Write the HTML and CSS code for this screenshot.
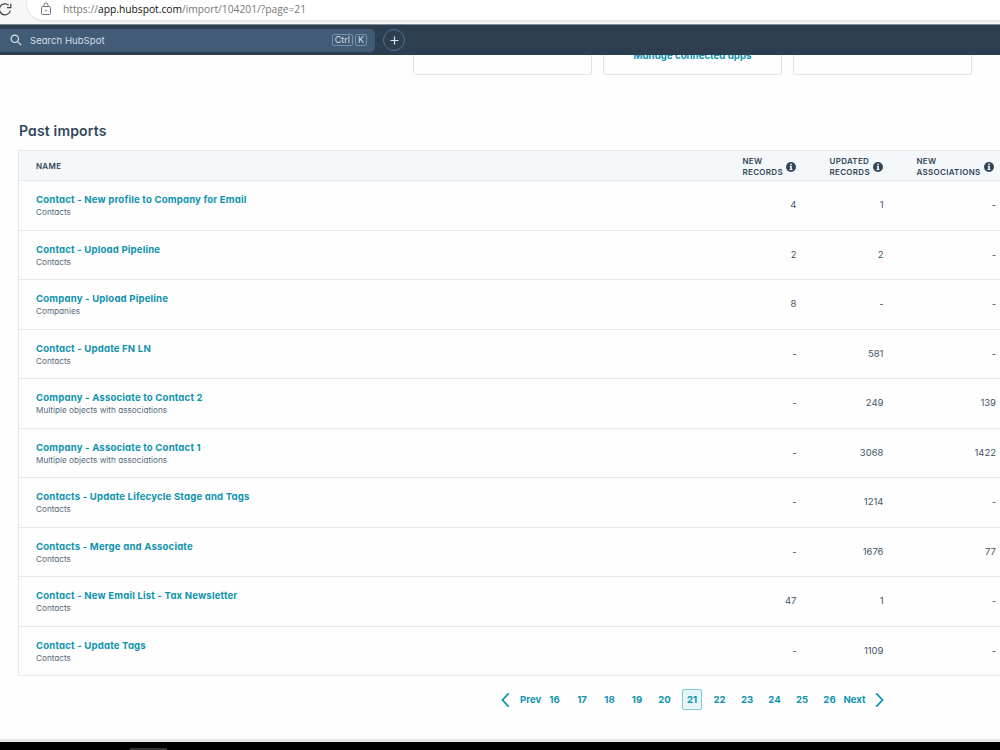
FILE: index.html
```
<!DOCTYPE html>
<html lang="en">
<head>
    <meta charset="UTF-8">
    <meta name="viewport" content="width=device-width, initial-scale=1.0">
    <title>Imports</title>
    <link rel="stylesheet" href="styles.css">
</head>
<body>
    <div class="browser-bar">
        <svg class="reload" width="14" height="16" viewBox="0 0 14 16"><path d="M8.6 4.2A5.5 5.5 0 1 0 10.3 9.6M10.8 2.8V6.6H7"/></svg>
        <div class="address">
            <svg class="lock" width="12" height="14" viewBox="0 0 12 14"><rect x="1.5" y="4.5" width="9" height="8" rx="1.2"/><path d="M4 4.5V3a2 2 0 0 1 4 0v1.5"/><circle cx="6" cy="8.5" r=".5"/></svg>
            <span class="url">https://<b>app.hubspot.com</b>/import/104201/?page=21</span>
        </div>
    </div>

    <nav class="topnav">
        <div class="search">
            <svg width="12" height="12" viewBox="0 0 12 12"><circle cx="4.8" cy="4.8" r="3.7"/><path d="M7.6 7.6L11.2 11.2"/></svg>
            <span class="search-text">Search HubSpot</span>
            <kbd>Ctrl</kbd><kbd>K</kbd>
        </div>
        <div class="add"><svg width="9" height="9" viewBox="0 0 9 9"><path d="M4.5 .5v8M.5 4.5h8"/></svg></div>
    </nav>

    <main>
        <div class="cards">
            <div class="card"></div>
            <div class="card"><a>Manage connected apps</a></div>
            <div class="card"></div>
        </div>

        <h1>Past imports</h1>

        <div class="table">
            <div class="row head">
                <div>NAME</div>
                <div class="th"><span>NEW<br>RECORDS</span><svg class="info" width="10" height="10" viewBox="0 0 10 10"><circle cx="5" cy="5" r="5"/><path d="M4.2 1.8h1.6v1.4H4.2zM3.8 4.1h2v2.9h.6v1H3.6V7h.7V5.1h-.5z"/></svg></div>
                <div class="th"><span>UPDATED<br>RECORDS</span><svg class="info" width="10" height="10" viewBox="0 0 10 10"><circle cx="5" cy="5" r="5"/><path d="M4.2 1.8h1.6v1.4H4.2zM3.8 4.1h2v2.9h.6v1H3.6V7h.7V5.1h-.5z"/></svg></div>
                <div class="th"><span>NEW<br>ASSOCIATIONS</span><svg class="info" width="10" height="10" viewBox="0 0 10 10"><circle cx="5" cy="5" r="5"/><path d="M4.2 1.8h1.6v1.4H4.2zM3.8 4.1h2v2.9h.6v1H3.6V7h.7V5.1h-.5z"/></svg></div>
            </div>
            <div class="row">
                <div><a>Contact - New profile to Company for Email</a><small>Contacts</small></div>
                <div class="num">4</div><div class="num">1</div><div class="num">-</div>
            </div>
            <div class="row">
                <div><a>Contact - Upload Pipeline</a><small>Contacts</small></div>
                <div class="num">2</div><div class="num">2</div><div class="num">-</div>
            </div>
            <div class="row">
                <div><a>Company - Upload Pipeline</a><small>Companies</small></div>
                <div class="num">8</div><div class="num">-</div><div class="num">-</div>
            </div>
            <div class="row">
                <div><a>Contact - Update FN LN</a><small>Contacts</small></div>
                <div class="num">-</div><div class="num">581</div><div class="num">-</div>
            </div>
            <div class="row">
                <div><a>Company - Associate to Contact 2</a><small>Multiple objects with associations</small></div>
                <div class="num">-</div><div class="num">249</div><div class="num">139</div>
            </div>
            <div class="row">
                <div><a>Company - Associate to Contact 1</a><small>Multiple objects with associations</small></div>
                <div class="num">-</div><div class="num">3068</div><div class="num">1422</div>
            </div>
            <div class="row">
                <div><a>Contacts - Update Lifecycle Stage and Tags</a><small>Contacts</small></div>
                <div class="num">-</div><div class="num">1214</div><div class="num">-</div>
            </div>
            <div class="row">
                <div><a>Contacts - Merge and Associate</a><small>Contacts</small></div>
                <div class="num">-</div><div class="num">1676</div><div class="num">77</div>
            </div>
            <div class="row">
                <div><a>Contact - New Email List - Tax Newsletter</a><small>Contacts</small></div>
                <div class="num">47</div><div class="num">1</div><div class="num">-</div>
            </div>
            <div class="row">
                <div><a>Contact - Update Tags</a><small>Contacts</small></div>
                <div class="num">-</div><div class="num">1109</div><div class="num">-</div>
            </div>
        </div>

        <div class="pagination">
            <svg width="9" height="16" viewBox="0 0 9 16"><path d="M7.7 1.3L1.5 8l6.2 6.7"/></svg>
            <a class="prev">Prev</a>
            <div class="pages">
                <a>16</a><a>17</a><a>18</a><a>19</a><a>20</a><a class="current">21</a><a>22</a><a>23</a><a>24</a><a>25</a><a>26</a>
            </div>
            <a class="next">Next</a>
            <svg width="9" height="16" viewBox="0 0 9 16"><path d="M1.3 1.3L7.5 8l-6.2 6.7"/></svg>
        </div>
    </main>

    <footer class="taskbar"><div class="task"></div></footer>
</body>
</html>
```
FILE: styles.css
```
* {
    box-sizing: border-box;
}

body {
    display: flex;
    flex-direction: column;
    height: 750px;
    margin: 0;
    overflow: hidden;
    background: #fefefe;
    color: #33475b;
    font-family: Inter, "Liberation Sans", sans-serif;
    font-feature-settings: "cv11";
}

svg {
    flex: none;
    fill: none;
}

/* Browser */
.browser-bar {
    display: flex;
    flex: none;
    height: 25px;
    background: #f7f7f7;
    border-bottom: 1px solid #7d8a94;
}

.reload {
    width: 14px;
    margin-top: 1px;
    stroke: #444;
    stroke-width: 1.2;
}

.address {
    display: flex;
    flex: 1;
    height: 22px;
    margin-left: 12px;
    padding-left: 13px;
    background: #fff;
    border: solid #e6e6e4;
    border-width: 0 0 2px 1px;
    border-radius: 0 0 0 18px;
}

.lock {
    margin-top: 2px;
    stroke: #777;
}

.url {
    margin-left: 11px;
    font: 10.25px/19px "Open Sans", sans-serif;
    color: #777;
}

.url b {
    font-weight: 400;
    color: #111;
}

/* Top navigation */
.topnav {
    display: flex;
    flex: none;
    align-items: center;
    height: 30px;
    background: #2d3e50;
}

.search {
    display: flex;
    align-items: center;
    width: 375px;
    height: 23px;
    padding: 0 8px 0 10px;
    background: #425b76;
    border-radius: 0 5px 5px 0;
    color: #d5dee8;
}

.search svg,
.add svg {
    stroke: #dfe6ee;
    stroke-width: 1.2;
}

.search-text {
    flex: 1;
    margin-left: 8px;
    font-size: 9.6px;
}

kbd {
    height: 12px;
    margin-left: 2px;
    padding: 0 2px;
    border: 1px solid #7890a8;
    border-radius: 2px;
    font: 9px/10px Inter, sans-serif;
}

.add {
    display: flex;
    align-items: center;
    justify-content: center;
    width: 22px;
    height: 22px;
    margin-left: 8px;
    border: 1px solid #516f90;
    border-radius: 50%;
}

/* Page */
main {
    flex: 1;
    min-height: 0;
    overflow: hidden;
}

a {
    color: #0f93ae;
    font-weight: 700;
}

.cards {
    display: flex;
    gap: 11px;
    height: 20px;
    margin-left: 413px;
    overflow: hidden;
}

.card {
    width: 179px;
    border: 1px solid #e1e4ee;
    border-top: 0;
    border-radius: 0 0 3px 3px;
    text-align: center;
}

.card a {
    display: block;
    margin-top: -6px;
    font-size: 9.7px;
    line-height: 14px;
}

h1 {
    margin: 46px 0 10px 19px;
    font-size: 14px;
    font-weight: 600;
    letter-spacing: .15px;
    line-height: 19px;
}

.table {
    width: 1040px;
    margin-left: 18px;
    border: 1px solid #e3e8ee;
}

.row {
    display: grid;
    grid-template-columns: 706px 87px 87px 1fr;
    height: 49.5px;
    padding-left: 17px;
    border-bottom: 1px solid #e3e8ee;
}

.row:last-child {
    height: 48.5px;
    border-bottom: 0;
}

.row a {
    display: block;
    margin-top: 12px;
    font-size: 9.6px;
    letter-spacing: .17px;
    line-height: 13px;
}

small {
    display: block;
    font-size: 8.2px;
    line-height: 12px;
    color: #566a7e;
}

.num {
    width: 54.5px;
    font-size: 9.5px;
    line-height: 48px;
    text-align: right;
    color: #425568;
}

.num:last-child {
    width: 80px;
}

.head {
    align-items: center;
    height: 30px;
    padding-top: 2px;
    background: #f5f8fa;
    font-size: 8px;
    font-weight: 600;
    letter-spacing: .3px;
    line-height: 10.5px;
}

.th {
    display: flex;
    align-items: center;
    gap: 3px;
    padding-left: .5px;
    white-space: nowrap;
}

.info circle {
    fill: #33475b;
}

.info path {
    fill: #fff;
}

.pagination {
    display: flex;
    align-items: center;
    height: 21px;
    margin: 13px 0 0 501px;
    font-size: 9.6px;
}

.pagination svg {
    stroke: #0f93ae;
    stroke-width: 1.8;
}

.prev {
    width: 25px;
    margin-left: 10px;
}

.pages {
    display: flex;
    gap: 7.5px;
    margin-left: -.5px;
}

.pages a {
    width: 20px;
    border: 1px solid transparent;
    line-height: 19px;
    text-align: center;
}

.pages .current {
    background: #e5f5f8;
    border-color: #7fcbd8;
    border-radius: 2px;
}

.next {
    width: 25px;
    margin: 0 6px 0 4px;
}

/* Bottom edge of the window */
.taskbar {
    flex: none;
    height: 11px;
    padding: 6px 0 0 130px;
    background: #000;
    border-top: 3px solid #e5e6e6;
}

.task {
    width: 37px;
    height: 2px;
    background: #333;
}
```
